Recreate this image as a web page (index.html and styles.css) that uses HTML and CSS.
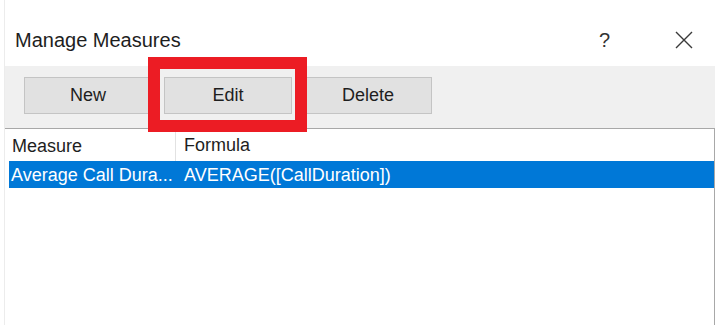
FILE: index.html
```html
<!DOCTYPE html>
<html lang="en">
<head>
    <meta charset="UTF-8">
    <title>Manage Measures</title>
    <link rel="stylesheet" href="styles.css">
</head>
<body>
<div class="dialog">
    <div class="titlebar">
        <span class="title">Manage Measures</span>
        <span class="help">?</span>
        <svg class="close" width="18" height="18" viewBox="0 0 18 18">
            <path d="M1 1 L17 17 M17 1 L1 17" stroke="#3a3a3a" stroke-width="1.4" fill="none"/>
        </svg>
    </div>

    <div class="toolbar">
        <button class="btn">New</button>
        <div class="mark-wrap">
            <button class="btn">Edit</button>
            <span class="mark"></span>
        </div>
        <button class="btn">Delete</button>
    </div>

    <div class="list">
        <div class="list-head">
            <div class="cell col-measure">Measure</div>
            <div class="cell col-formula">Formula</div>
        </div>
        <div class="list-row selected">
            <div class="cell col-measure">Average Call Dura...</div>
            <div class="cell col-formula">AVERAGE([CallDuration])</div>
        </div>
    </div>
</div>
</body>
</html>
```

FILE: styles.css
```css
* {
    box-sizing: border-box;
    margin: 0;
    padding: 0;
    font-family: "Liberation Sans", Arial, sans-serif;
}

body {
    background: #fff;
    color: #1e1e1e;
    width: 720px;
    height: 325px;
    overflow: hidden;
}

.dialog {
    margin-left: 4px;
    width: 711px;
    height: 325px;
    border-left: 1px solid #ececec;
    display: flex;
    flex-direction: column;
}

.titlebar {
    height: 66px;
    background: #fff;
    display: flex;
    align-items: flex-start;
    padding-top: 30px;
    padding-left: 10px;
}

.title {
    font-size: 20px;
    line-height: 20px;
    flex: 1;
}

.help {
    font-size: 20px;
    line-height: 20px;
    color: #333;
    width: 76px;
}

.close {
    margin-top: 1px;
    margin-right: 22px;
}

.toolbar {
    height: 62px;
    background: #f0f0f0;
    display: flex;
    gap: 12px;
    padding: 11px 0 0 19px;
}

.btn {
    width: 128px;
    height: 37px;
    background: #e1e1e1;
    border: 1px solid #c4c4c4;
    font-size: 18px;
    color: #1e1e1e;
}

.mark-wrap {
    position: relative;
    height: 37px;
}

.mark {
    position: absolute;
    left: -16px;
    right: -15px;
    top: -20px;
    bottom: -18px;
    border: 12px solid #ec1c24;
}

.list {
    flex: 1;
    background: #fff;
    border-top: 1px solid #a8a8a8;
    border-right: 1px solid #a8a8a8;
}

.list-head {
    height: 32px;
    display: flex;
    align-items: center;
}

.cell {
    font-size: 18px;
    line-height: 20px;
    white-space: nowrap;
}

.list-head .col-measure {
    width: 171px;
    height: 32px;
    padding: 7px 0 0 7px;
    border-right: 1px solid #e2e2e2;
}

.list-head .col-formula {
    padding-left: 8px;
}

.list-row {
    height: 27px;
    margin-left: 4px;
    display: flex;
    align-items: center;
}

.selected {
    background: #0078d7;
    color: #fff;
}

.list-row .col-measure {
    width: 167px;
    padding-left: 2px;
}

.list-row .col-formula {
    padding-left: 8px;
}
```
